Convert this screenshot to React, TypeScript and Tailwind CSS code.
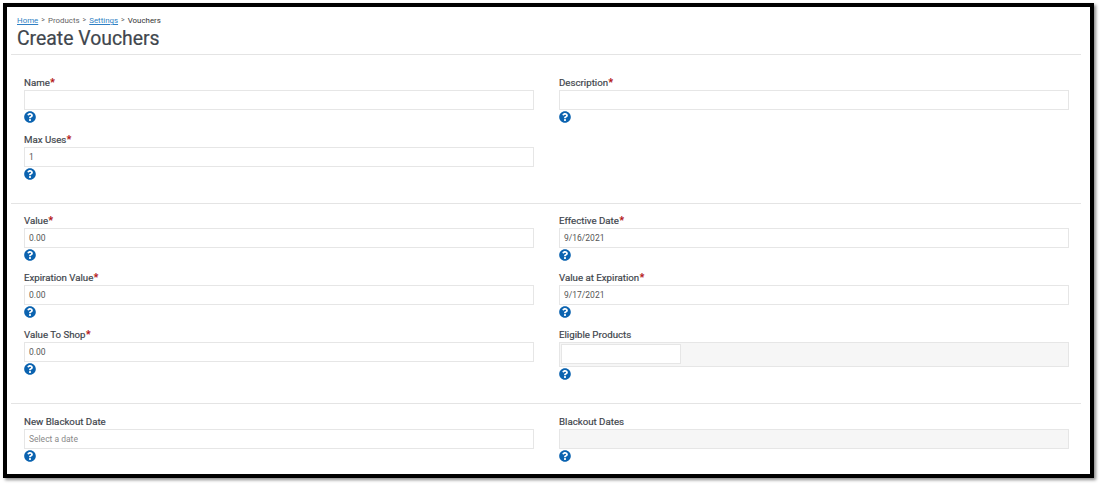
import React from "react";
import { FaQuestionCircle } from "react-icons/fa";

function Help() {
  return (
    <div className="mt-[1px] h-[12px]">
      <FaQuestionCircle className="size-[12px] text-[#0b63b0]" />
    </div>
  );
}

function Label({ text, required }: { text: string; required?: boolean }) {
  return (
    <div className="h-[14px] pt-[1px] text-[9.7px] leading-[12px] text-[#3f464d] [-webkit-text-stroke:0.2px_#3f464d]">
      {text}
      {required && (
        <span className="ml-[0.5px] text-[10.5px] text-[#b21010] [-webkit-text-stroke:0.2px_#b21010]">*</span>
      )}
    </div>
  );
}

function Field({
  label,
  required,
  value,
  placeholder,
}: {
  label: string;
  required?: boolean;
  value?: string;
  placeholder?: string;
}) {
  return (
    <div className="h-[57px]">
      <Label text={label} required={required} />
      <div className="flex h-[20px] items-center border border-[#e6e6e6] bg-white pl-[4px] text-[8.5px] text-[#555]">
        {value}
        {placeholder && <span className="text-[#8a8a8a]">{placeholder}</span>}
      </div>
      <Help />
    </div>
  );
}

function App() {
  return (
    <div className="h-[488px] w-[1102px] bg-white pt-[3px] pl-[3px] font-['Roboto',sans-serif]">
      <div className="h-[475px] w-[1091px] border-4 border-black bg-white shadow-[2px_2px_3px_rgba(0,0,0,0.45)]">
        {/* Breadcrumb + title */}
        <div className="mr-[9px] ml-[4px] h-[48px] border-b border-[#e4e4e4] pt-[9px] pl-[6px]">
          <div className="flex h-[9px] items-center gap-[3px] text-[7.9px] leading-[9px] text-[#666]">
            <span className="text-[#2f7fc4] underline">Home</span>
            <span className="text-[7px]">&gt;</span>
            <span>Products</span>
            <span className="text-[7px]">&gt;</span>
            <span className="text-[#2f7fc4] underline">Settings</span>
            <span className="text-[7px]">&gt;</span>
            <span className="text-[#333]">Vouchers</span>
          </div>
          <div className="mt-[2px] text-[19.4px] leading-[24px] text-[#3f464d] [-webkit-text-stroke:0.2px_#3f464d]">
            Create Vouchers
          </div>
        </div>

        {/* Name */}
        <div className="mr-[9px] ml-[4px] h-[149px] border-b border-[#e4e4e4] pt-[21px] pr-[12px] pl-[13px]">
          <div className="grid grid-cols-2 gap-x-[25px]">
            <Field label="Name" required />
            <Field label="Description" required />
            <Field label="Max Uses" required value="1" />
          </div>
        </div>

        {/* Values */}
        <div className="mr-[9px] ml-[4px] h-[200px] border-b border-[#e4e4e4] pt-[10px] pr-[12px] pl-[13px]">
          <div className="grid grid-cols-2 gap-x-[25px]">
            <Field label="Value" required value="0.00" />
            <Field label="Effective Date" required value="9/16/2021" />
            <Field label="Expiration Value" required value="0.00" />
            <Field label="Value at Expiration" required value="9/17/2021" />
            <Field label="Value To Shop" required value="0.00" />
            <div>
              <Label text="Eligible Products" />
              <div className="h-[25px] border border-[#e6e6e6] bg-[#f6f6f6] p-[1px]">
                <div className="h-[20px] w-[120px] border border-[#e6e6e6] bg-white" />
              </div>
              <div className="mt-[1px]">
                <Help />
              </div>
            </div>
          </div>
        </div>

        {/* Blackout dates */}
        <div className="mr-[9px] ml-[4px] pt-[11px] pr-[12px] pl-[13px]">
          <div className="grid grid-cols-2 gap-x-[25px]">
            <Field label="New Blackout Date" placeholder="Select a date" />
            <div>
              <Label text="Blackout Dates" />
              <div className="h-[20px] border border-[#e6e6e6] bg-[#f6f6f6]" />
              <Help />
            </div>
          </div>
        </div>
      </div>
    </div>
  );
}

export default App;
